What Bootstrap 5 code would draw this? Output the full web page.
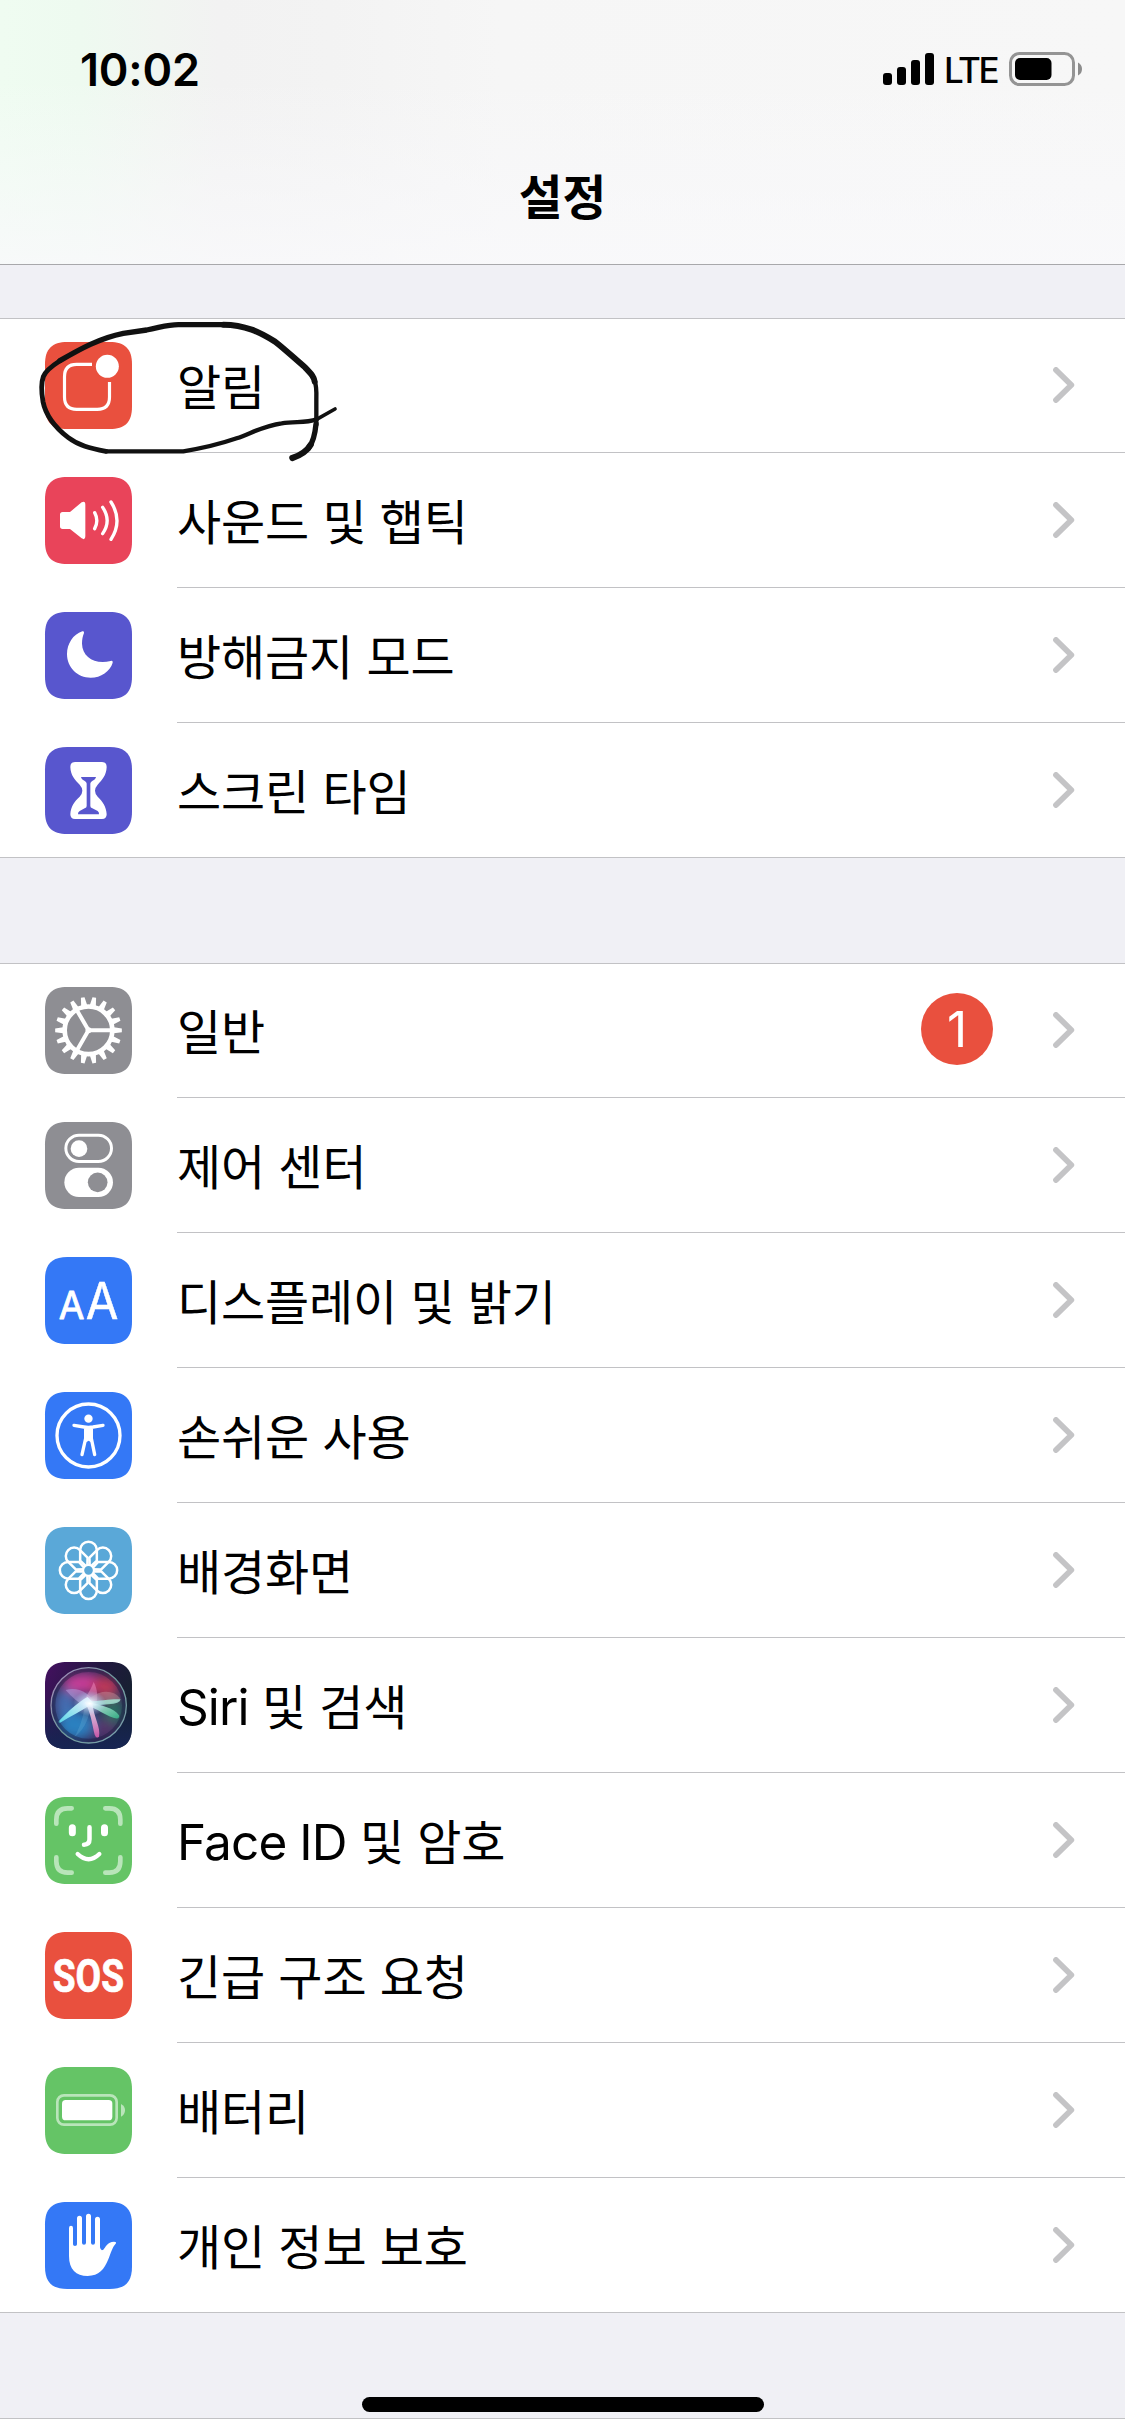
<!DOCTYPE html>
<html lang="ko">
<head>
<meta charset="utf-8">
<meta name="viewport" content="width=device-width, initial-scale=1">
<title>설정</title>
<link rel="stylesheet" href="https://cdn.jsdelivr.net/npm/bootstrap@5.3.0/dist/css/bootstrap.min.css">
<style>
  html, body { margin: 0; background: #f0f0f5; }
  body { font-family: Inter, "Noto Sans CJK KR", sans-serif; color: #000; }
  .phone { width: 1125px; height: 2436px; }
  .top-area {
    height: 265px; border-bottom: 1px solid #a8a8ab;
    background:
      linear-gradient(180deg, rgba(249,249,251,0) 30%, rgba(249,249,251,.85) 100%),
      linear-gradient(90deg, #effcf1 0, #eefaf0 80px, #f1f5f1 160px, #f2f2f2 220px, #f3f3f3 330px, #f6f6f6 500px, #f7f7f7 100%);
  }
  .status-line { height: 138px; padding: 0 43px 0 80px; }
  .clock { font-size: 45px; font-weight: 600; line-height: 1; letter-spacing: -.2px; }
  .carrier { font-size: 35px; font-weight: 500; line-height: 1; letter-spacing: -2.5px; margin: 3px 12px 0 10px; }
  .page-title { font-size: 47.5px; font-weight: 700; line-height: 60px; padding-top: 30px; }
  .settings-group { --bs-list-group-border-radius: 0; }
  .settings-group .setting {
    height: 135px; padding: 23px 0 0 45px; border: 0; border-top: 1px solid transparent;
    position: relative; background: #fff; color: #000;
  }
  .settings-group .setting:first-child, .stub { border-top: 1px solid #c2c2c5; }
  .settings-group .setting::after {
    content: ""; position: absolute; left: 177px; right: 0; bottom: 0; height: 1px; background: #c2c2c5;
  }
  .settings-group .setting:last-child::after { left: 0; }
  .app-icon { width: 87px; height: 87px; flex: none; overflow: visible; }
  .label { font-size: 48px; line-height: 87px; height: 87px; padding: 2px 0 0 45px; white-space: nowrap; letter-spacing: -.15px; }
  .latin { font-size: 49.5px; letter-spacing: -.9px; line-height: 1; }
  .count { width: 72px; height: 72px; font-size: 49.5px; font-weight: 400; line-height: 72px; padding: 0; margin: 6px 60px 0 0; background: #e9503e; color: #fff; }
  .chevron { width: 22px; height: 36px; margin: 25px 50px 0 0; flex: none; }
  .gap-top { height: 53px; }
  .gap-mid { height: 105px; }
  .stub { height: 18px; background: #fff; }
  .home-bar { position: absolute; left: 362px; bottom: 24px; width: 402px; height: 15px; border-radius: 8px; background: #000; }
  .pen { position: absolute; left: 0; top: -9px; width: 375px; height: 160px; z-index: 3; }
</style>
<script src="https://cdn.jsdelivr.net/npm/bootstrap@5.3.0/dist/js/bootstrap.bundle.min.js"></script>
</head>
<body>
<svg width="0" height="0" class="position-absolute">
  <defs>
    <path id="tile" d="M67 0H194C240 0 261 21 261 67V194C261 240 240 261 194 261H67C21 261 0 240 0 194V67C0 21 21 0 67 0Z"/>
    <clipPath id="tileClip"><use href="#tile"/></clipPath>
    <symbol id="chev" viewBox="0 0 22 36"><path d="M3 3L18.300 18L3 33" fill="none" stroke="#c4c4c6" stroke-width="5.800" stroke-linecap="round" stroke-linejoin="round"/></symbol>
    <path id="cogbar" d="M-100 -5.500L-76 -9H-70V9H-76L-100 5.500ZM100 -5.500L76 -9H70V9H76L100 5.500Z"/>
    <path id="petal" d="M-6 -11L-25 -29V-61A25 25 0 0 1 25 -61V-29L6 -11"/>
  </defs>
</svg>
<main class="phone position-relative overflow-hidden d-flex flex-column">
  <header class="top-area">
    <div class="status-line d-flex align-items-center justify-content-between">
      <span class="clock">10:02</span>
      <div class="d-flex align-items-center">
        <svg width="51" height="32" viewBox="0 0 51 32"><rect y="20" width="9" height="12" rx="3"/><rect x="14" y="14" width="9" height="18" rx="3"/><rect x="28" y="7" width="9" height="25" rx="3"/><rect x="42" width="9" height="32" rx="3"/></svg>
        <span class="carrier">LTE</span>
        <svg width="73" height="34" viewBox="0 0 73 34"><rect x="1.500" y="1.500" width="63" height="31" rx="9" fill="none" stroke="#949494" stroke-width="3"/><rect x="6" y="6" width="36.500" height="22" rx="5"/><path d="M69 10.500Q73 12.500 73 17T69 23.500Z" fill="#8c8c8c"/></svg>
      </div>
    </div>
    <h1 class="page-title text-center m-0">설정</h1>
  </header>
  <div class="gap-top"></div>

  <section class="list-group settings-group">
    <div class="list-group-item setting d-flex">
      <svg class="app-icon" viewBox="0 0 261 261"><use href="#tile" fill="#e9503e"/><path d="M141 67H95Q58.500 67 58.500 104V165Q58.500 202 95 202H157Q193.500 202 193.500 165V120" fill="none" stroke="#fff" stroke-width="9.500"/><circle cx="187" cy="73" r="34.500" fill="#fff"/></svg>
      <span class="label flex-grow-1">알림</span>
      <svg class="chevron"><use href="#chev"/></svg>
      <svg class="pen" viewBox="0 0 1125 480" fill="none" stroke="#111" stroke-linecap="round" stroke-linejoin="round">
        <path stroke-width="11" d="M1005 297L950 328"/>
        <path stroke-width="13" d="M950 328C915 340 885 333 845 340C790 348 760 367 710 385C655 404 600 416 550 424H318"/>
        <path stroke-width="14.500" d="M318 424C270 415 235 406 205 383C165 352 137 315 129 275C123 240 123 220 130 200C135 185 155 168 180 152"/>
        <path stroke-width="16" d="M180 152C240 117 300 84 370 70L440 60C490 50 505 44 535 44H670"/>
        <path stroke-width="18" d="M670 44C735 44 780 67 825 95C850 114 880 142 915 172C935 193 942 200 944 215"/>
        <path stroke-width="13" d="M942 206C949 222 950 240 949 270V345"/>
        <path stroke-width="16" d="M948 342C945 375 937 400 926 414"/>
        <path stroke-width="18.500" d="M932 404C920 425 900 436 877 444"/>
      </svg>
    </div>
    <div class="list-group-item setting d-flex">
      <svg class="app-icon" viewBox="0 0 261 261"><use href="#tile" fill="#e9445a"/><path d="M53 105H75L110 76Q121 70 121 83V178Q121 191 110 184L75 156H53Q45 156 45 148V113Q45 105 53 105Z" fill="#fff"/><path d="M149 107Q162 131 149 155M173 91Q200 131 173 170M198 75Q234 131 198 187" fill="none" stroke="#fff" stroke-width="10" stroke-linecap="round"/></svg>
      <span class="label flex-grow-1">사운드 및 햅틱</span>
      <svg class="chevron"><use href="#chev"/></svg>
    </div>
    <div class="list-group-item setting d-flex">
      <svg class="app-icon" viewBox="0 0 261 261"><use href="#tile" fill="#5856ce"/><path d="M112 58C84 67 66 96 66 126C66 167 98 197 137 197C168 197 195 178 203 152Q204 144 197 147C150 159 112 135 111 95C111 82 113 74 117 63Q118 56 112 58Z" fill="#fff"/></svg>
      <span class="label flex-grow-1">방해금지 모드</span>
      <svg class="chevron"><use href="#chev"/></svg>
    </div>
    <div class="list-group-item setting d-flex">
      <svg class="app-icon" viewBox="0 0 261 261"><use href="#tile" fill="#5856ce"/><path d="M90 45H171Q185 45 185 60C184 85 172 98 158 113Q150 122 150 131Q150 140 158 149C172 163 184 178 185 202Q185 216 171 216H90Q76 216 76 202C77 178 89 163 104 149Q112 140 112 131Q112 122 104 113C89 98 77 85 76 60Q76 45 90 45Z" fill="#fff"/><path d="M108 90H153Q153 94 148 98Q136 104 136 110V177Q136 182 142 184L158 192Q163 196 162 202H99Q98 196 104 192L119 184Q125 182 125 177V110Q125 104 113 98Q108 94 108 90Z" fill="#5856ce"/></svg>
      <span class="label flex-grow-1">스크린 타임</span>
      <svg class="chevron"><use href="#chev"/></svg>
    </div>
  </section>
  <div class="gap-mid"></div>

  <section class="list-group settings-group">
    <div class="list-group-item setting d-flex">
      <svg class="app-icon" viewBox="0 0 261 261"><use href="#tile" fill="#8e8e93"/><g transform="translate(130.500 130)" fill="#fff"><use href="#cogbar"/><use href="#cogbar" transform="rotate(20)"/><use href="#cogbar" transform="rotate(40)"/><use href="#cogbar" transform="rotate(60)"/><use href="#cogbar" transform="rotate(80)"/><use href="#cogbar" transform="rotate(100)"/><use href="#cogbar" transform="rotate(120)"/><use href="#cogbar" transform="rotate(140)"/><use href="#cogbar" transform="rotate(160)"/><circle r="71.500" fill="none" stroke="#fff" stroke-width="14"/><path d="M0 0H68M0 0L-34 -59M0 0L-34 59" fill="none" stroke="#fff" stroke-width="12"/><circle r="9"/></g></svg>
      <span class="label flex-grow-1">일반</span>
      <span class="badge rounded-circle count">1</span>
      <svg class="chevron"><use href="#chev"/></svg>
    </div>
    <div class="list-group-item setting d-flex">
      <svg class="app-icon" viewBox="0 0 261 261"><use href="#tile" fill="#8e8e93"/><rect x="62.500" y="39.500" width="137" height="79" rx="39.500" fill="none" stroke="#fff" stroke-width="9"/><circle cx="102" cy="80" r="25" fill="#fff"/><rect x="58" y="137" width="146" height="88" rx="44" fill="#fff"/><circle cx="158" cy="181" r="29.500" fill="#8e8e93"/></svg>
      <span class="label flex-grow-1">제어 센터</span>
      <svg class="chevron"><use href="#chev"/></svg>
    </div>
    <div class="list-group-item setting d-flex">
      <svg class="app-icon" viewBox="0 0 261 261"><use href="#tile" fill="#3478f6"/><g fill="#fff" stroke="#fff" stroke-linejoin="round" font-family="Inter, sans-serif" font-weight="400"><text x="41" y="185" font-size="116" stroke-width="2.500" textLength="77" lengthAdjust="spacingAndGlyphs">A</text><text x="122" y="185" font-size="150" stroke-width="1.500" textLength="98" lengthAdjust="spacingAndGlyphs">A</text></g></svg>
      <span class="label flex-grow-1">디스플레이 및 밝기</span>
      <svg class="chevron"><use href="#chev"/></svg>
    </div>
    <div class="list-group-item setting d-flex">
      <svg class="app-icon" viewBox="0 0 261 261"><use href="#tile" fill="#3478f6"/><circle cx="130.500" cy="130.500" r="94.500" fill="none" stroke="#fff" stroke-width="10"/><circle cx="130.500" cy="80" r="12.500" fill="#fff"/><path d="M87 100L117 105Q130 107 144 105L174 100M122 108V139L111 188M139 108V139L149 188" fill="none" stroke="#fff" stroke-width="10" stroke-linecap="round" stroke-linejoin="round"/><path d="M118 105H143V146L138 151L131 146L123 151L118 146Z" fill="#fff"/></svg>
      <span class="label flex-grow-1">손쉬운 사용</span>
      <svg class="chevron"><use href="#chev"/></svg>
    </div>
    <div class="list-group-item setting d-flex">
      <svg class="app-icon" viewBox="0 0 261 261"><use href="#tile" fill="#5aa8d8"/><g transform="translate(130.500 130)" fill="none" stroke="#fff" stroke-width="7.500" stroke-linejoin="round"><use href="#petal"/><use href="#petal" transform="rotate(45)"/><use href="#petal" transform="rotate(90)"/><use href="#petal" transform="rotate(135)"/><use href="#petal" transform="rotate(180)"/><use href="#petal" transform="rotate(225)"/><use href="#petal" transform="rotate(270)"/><use href="#petal" transform="rotate(315)"/><circle r="16" fill="#5aa8d8" stroke-width="6"/></g></svg>
      <span class="label flex-grow-1">배경화면</span>
      <svg class="chevron"><use href="#chev"/></svg>
    </div>
    <div class="list-group-item setting d-flex">
      <svg class="app-icon" viewBox="0 0 261 261">
        <defs>
          <linearGradient id="sBg" x1="0" y1="0" x2="1" y2=".5"><stop offset="0" stop-color="#451061"/><stop offset=".55" stop-color="#21183f"/><stop offset="1" stop-color="#14222e"/></linearGradient>
          <linearGradient id="sLow" x1="0" y1="0" x2="0" y2="1"><stop offset=".4" stop-color="#16245c" stop-opacity="0"/><stop offset="1" stop-color="#172553"/></linearGradient>
          <radialGradient id="sGlow"><stop offset="0" stop-color="#fff"/><stop offset=".25" stop-color="#e6f4ff" stop-opacity=".8"/><stop offset="1" stop-color="#a8d0ff" stop-opacity="0"/></radialGradient>
          <linearGradient id="sRing" x1="0" y1="0" x2="1" y2="1"><stop offset="0" stop-color="#a989bd"/><stop offset=".5" stop-color="#6f9a9c"/><stop offset="1" stop-color="#7d9fae"/></linearGradient>
          <linearGradient id="sCyan" x1="1" y1="0" x2="0" y2="1"><stop offset="0" stop-color="#fff"/><stop offset="1" stop-color="#58d9ea"/></linearGradient>
          <linearGradient id="sGreen" x1="0" y1="0" x2="1" y2="1"><stop offset="0" stop-color="#e4fff8"/><stop offset="1" stop-color="#37b98a"/></linearGradient>
          <linearGradient id="sPink" x1="0" y1="0" x2="0" y2="1"><stop offset="0" stop-color="#fff"/><stop offset="1" stop-color="#dc5bb0"/></linearGradient>
          <filter id="sBlur" x="-50%" y="-50%" width="200%" height="200%"><feGaussianBlur stdDeviation="16"/></filter>
          <filter id="sSoft" x="-20%" y="-20%" width="140%" height="140%"><feGaussianBlur stdDeviation="2"/></filter>
          <clipPath id="sBall"><circle cx="131" cy="130" r="111"/></clipPath>
        </defs>
        <g clip-path="url(#tileClip)">
          <rect width="261" height="261" fill="url(#sBg)"/><rect width="261" height="261" fill="url(#sLow)"/>
          <g clip-path="url(#sBall)">
            <circle cx="131" cy="130" r="111" fill="#332a5c"/>
            <g filter="url(#sBlur)">
              <ellipse cx="115" cy="64" rx="62" ry="30" fill="#c83c98"/><ellipse cx="180" cy="74" rx="42" ry="32" fill="#bd3858"/>
              <ellipse cx="62" cy="128" rx="34" ry="48" fill="#446cb0"/><ellipse cx="95" cy="190" rx="58" ry="42" fill="#2a80c0"/>
              <ellipse cx="205" cy="150" rx="32" ry="44" fill="#2a6c60"/><ellipse cx="176" cy="198" rx="38" ry="28" fill="#55346c"/>
            </g>
            <g filter="url(#sSoft)">
              <path d="M62 84C100 74 132 92 150 125L120 134C100 122 80 105 62 84Z" fill="#b8a3e4" opacity=".5"/>
              <path d="M146 60C158 82 160 110 152 130L112 128C120 105 135 90 146 60Z" fill="#f08bc2" opacity=".5"/>
              <path d="M135 108C170 82 205 85 225 108Q229 120 200 123L140 130Z" fill="#c98d9c" opacity=".45"/>
              <path d="M40 179C70 147 102 118 128 105L146 124C112 144 78 163 43 184Z" fill="url(#sCyan)" opacity=".95"/>
              <path d="M130 119C170 116 200 110 227 112Q225 125 190 127L135 132Z" fill="#a5f0de" opacity=".75"/>
              <path d="M128 121C165 128 208 138 222 160Q225 174 205 167C177 158 160 142 128 132Z" fill="url(#sGreen)" opacity=".85"/>
              <path d="M119 120L142 124C146 166 168 197 162 224Q155 233 149 218C141 186 138 152 119 120Z" fill="url(#sPink)" opacity=".85"/>
              <path d="M120 132L135 145C129 178 112 208 88 226C106 195 114 165 120 132Z" fill="#72b9dd" opacity=".25"/>
            </g>
            <ellipse cx="134" cy="124" rx="50" ry="38" fill="url(#sGlow)"/>
          </g>
          <circle cx="131" cy="130" r="105" fill="none" stroke="#171a3d" stroke-opacity=".4" stroke-width="10"/>
          <circle cx="131" cy="130" r="113" fill="none" stroke="url(#sRing)" stroke-width="4"/>
        </g>
      </svg>
      <span class="label flex-grow-1"><span class="latin">Siri</span> 및 검색</span>
      <svg class="chevron"><use href="#chev"/></svg>
    </div>
    <div class="list-group-item setting d-flex">
      <svg class="app-icon" viewBox="0 0 261 261"><use href="#tile" fill="#65c466"/><g fill="none" stroke="#fff" stroke-linecap="round"><path d="M34 80V68Q34 34 68 34H80M181 34H193Q226 34 226 68V80M226 181V193Q226 227 193 227H181M80 227H68Q34 227 34 193V181" stroke-width="14" stroke="#b9e5ba"/><path d="M82 92V107M178.500 92V107" stroke-width="21"/><path d="M133.500 91V127Q133.500 143 117 143" stroke-width="13.500"/><path d="M98 171Q131 202 163 171" stroke-width="13"/></g></svg>
      <span class="label flex-grow-1"><span class="latin">Face ID</span> 및 암호</span>
      <svg class="chevron"><use href="#chev"/></svg>
    </div>
    <div class="list-group-item setting d-flex">
      <svg class="app-icon" viewBox="0 0 261 261"><use href="#tile" fill="#e9503e"/><text x="23" y="181" font-family="Roboto, sans-serif" font-weight="700" font-size="137" textLength="214" lengthAdjust="spacingAndGlyphs" fill="#fff" stroke="#fff" stroke-width="2">SOS</text></svg>
      <span class="label flex-grow-1">긴급 구조 요청</span>
      <svg class="chevron"><use href="#chev"/></svg>
    </div>
    <div class="list-group-item setting d-flex">
      <svg class="app-icon" viewBox="0 0 261 261"><use href="#tile" fill="#65c466"/><rect x="37" y="85" width="178" height="88" rx="20" fill="none" stroke="#b9e5ba" stroke-width="8"/><rect x="51" y="99" width="151" height="61" rx="11" fill="#fff"/><path d="M228 111Q240 117 240 130T228 149Z" fill="#b9e5ba"/></svg>
      <span class="label flex-grow-1">배터리</span>
      <svg class="chevron"><use href="#chev"/></svg>
    </div>
    <div class="list-group-item setting d-flex">
      <svg class="app-icon" viewBox="0 0 261 261"><use href="#tile" fill="#3478f6"/><path d="M72 78Q72 71 78 71T84 78V127Q84 132 90 132T96 127V49Q96 41 103.500 41T111 49V122Q111 128 117 128T123 122V43Q123 35 130.500 35T138 43V122Q138 128 144 128T150 122V52Q150 44 157.500 44T165 52V136Q167 148 175 143C181 137 187 119 207 119Q216 119 212 125C202 135 197 155 190 172C178 202 162 222 128 222C93 222 72 202 72 162Z" fill="#fff"/></svg>
      <span class="label flex-grow-1">개인 정보 보호</span>
      <svg class="chevron"><use href="#chev"/></svg>
    </div>
  </section>
  <div class="gap-mid"></div>
  <div class="stub"></div>
  <div class="home-bar"></div>
</main>
</body>
</html>
